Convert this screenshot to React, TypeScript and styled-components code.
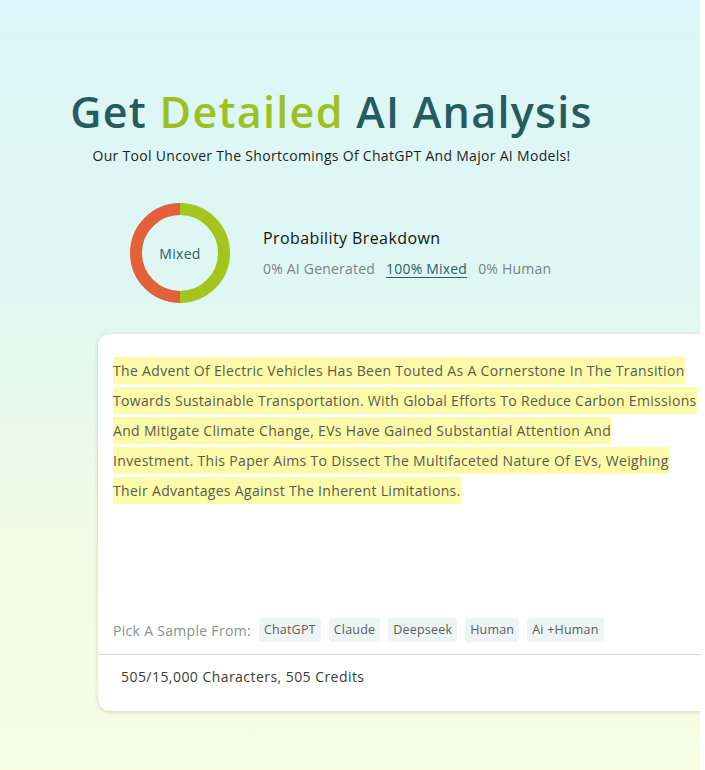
import React from 'react';
import styled, { createGlobalStyle } from 'styled-components';

const GlobalStyle = createGlobalStyle`
    html, body {
        margin: 0;
        padding: 0;
        background: #ffffff;
        font-family: 'Open Sans', 'Liberation Sans', sans-serif;
    }
    #root {
        height: 770px;
        overflow: hidden;
    }
`;

const SAMPLES = ['ChatGPT', 'Claude', 'Deepseek', 'Human', 'Ai +Human'];

const TEXT_LINES = [
    'The Advent Of Electric Vehicles Has Been Touted As A Cornerstone In The Transition',
    'Towards Sustainable Transportation. With Global Efforts To Reduce Carbon Emissions',
    'And Mitigate Climate Change, EVs Have Gained Substantial Attention And',
    'Investment. This Paper Aims To Dissect The Multifaceted Nature Of EVs, Weighing',
    'Their Advantages Against The Inherent Limitations. ',
];

const Ring: React.FC<{ label: string }> = ({ label }) => (
    <RingWrap>
        <svg width="100" height="100" viewBox="0 0 100 100">
            <path d="M50 6 A44 44 0 0 0 50 94" fill="none" stroke="#E2603A" strokeWidth="12" />
            <path d="M50 6 A44 44 0 0 1 50 94" fill="none" stroke="#A4C51E" strokeWidth="12" />
        </svg>
        <RingLabel>{label}</RingLabel>
    </RingWrap>
);

const App: React.FC = () => {
    return (
        <>
            <GlobalStyle />
            <Page>
                <Header>
                    <Title>
                        Get <Accent>Detailed</Accent> AI Analysis
                    </Title>
                    <Subtitle>Our Tool Uncover The Shortcomings Of ChatGPT And Major AI Models!</Subtitle>
                </Header>

                <Breakdown>
                    <Ring label="Mixed" />
                    <BreakdownInfo>
                        <BreakdownTitle>Probability Breakdown</BreakdownTitle>
                        <Stats>
                            <Stat>0% AI Generated</Stat>
                            <Stat active>100% Mixed</Stat>
                            <Stat>0% Human</Stat>
                        </Stats>
                    </BreakdownInfo>
                </Breakdown>

                <Card>
                    <CardBody>
                        <Passage>
                            {TEXT_LINES.map((line, i) => (
                                <React.Fragment key={i}>
                                    <Mark>{line}</Mark>
                                    <br />
                                </React.Fragment>
                            ))}
                        </Passage>
                        <SampleRow>
                            <SampleLabel>Pick A Sample From:</SampleLabel>
                            {SAMPLES.map((s) => (
                                <Chip key={s}>{s}</Chip>
                            ))}
                        </SampleRow>
                    </CardBody>
                    <CardFooter>505/15,000 Characters, 505 Credits</CardFooter>
                </Card>
            </Page>
        </>
    );
};

const Page = styled.div`
    width: 700px;
    height: 770px;
    overflow: hidden;
    background: linear-gradient(180deg, #dcf6f9 0%, #def7f3 35%, #eefbe6 65%, #f8fde2 100%);
    display: flex;
    flex-direction: column;
`;

const Header = styled.div`
    width: 663px;
    padding-top: 84px;
    display: flex;
    flex-direction: column;
    align-items: center;
`;

const Title = styled.h1`
    margin: 0;
    font-size: 43px;
    line-height: 56px;
    font-weight: 600;
    color: #285b60;
    letter-spacing: 1.3px;
`;

const Accent = styled.span`
    color: #9cc11f;
`;

const Subtitle = styled.p`
    margin: 6px 0 0;
    font-size: 14px;
    line-height: 20px;
    color: #1e1e1e;
    letter-spacing: 0.3px;
`;

const Breakdown = styled.div`
    display: flex;
    align-items: center;
    gap: 33px;
    padding: 37px 0 0 130px;
`;

const RingWrap = styled.div`
    position: relative;
    width: 100px;
    height: 100px;
`;

const RingLabel = styled.span`
    position: absolute;
    inset: 0;
    display: flex;
    align-items: center;
    justify-content: center;
    font-size: 14px;
    color: #2f6068;
    letter-spacing: 0.3px;
`;

const BreakdownInfo = styled.div`
    display: flex;
    flex-direction: column;
    gap: 10px;
`;

const BreakdownTitle = styled.div`
    font-size: 16px;
    line-height: 22px;
    font-weight: 500;
    color: #141414;
    letter-spacing: 0.4px;
`;

const Stats = styled.div`
    display: flex;
    gap: 11px;
`;

const Stat = styled.span<{ active?: boolean }>`
    font-size: 14px;
    line-height: 20px;
    letter-spacing: 0.2px;
    color: ${(p) => (p.active ? '#2d6068' : '#7b8383')};
    text-decoration: ${(p) => (p.active ? 'underline' : 'none')};
    text-underline-offset: 3px;
`;

const Card = styled.div`
    margin: 31px 0 0 98px;
    width: 640px;
    background: #ffffff;
    border-radius: 12px;
    box-shadow: 0 1px 4px rgba(0, 0, 0, 0.16);
    display: flex;
    flex-direction: column;
`;

const CardBody = styled.div`
    padding: 22px 15px 12px;
    height: 320px;
    box-sizing: border-box;
    display: flex;
    flex-direction: column;
    justify-content: space-between;
`;

const Passage = styled.div`
    font-size: 14px;
    line-height: 30px;
    color: #5b5b4e;
    white-space: nowrap;
    letter-spacing: 0.32px;
`;

const Mark = styled.span`
    background: #fdfaa9;
    padding: 4px 0;
    -webkit-box-decoration-break: clone;
    box-decoration-break: clone;
`;

const SampleRow = styled.div`
    display: flex;
    align-items: center;
    gap: 8px;
`;

const SampleLabel = styled.span`
    font-size: 14px;
    color: #8a8f8f;
    margin-right: 0;
    letter-spacing: 0.3px;
`;

const Chip = styled.span`
    background: #eef3f3;
    border-radius: 4px;
    padding: 3px 5px;
    font-size: 12.5px;
    line-height: 18px;
    color: #5a5f5f;
    letter-spacing: 0.2px;
`;

const CardFooter = styled.div`
    border-top: 1px solid #d9d9d9;
    padding: 12px 23px 0;
    height: 57px;
    box-sizing: border-box;
    font-size: 14px;
    line-height: 20px;
    color: #3a3a3a;
    letter-spacing: 0.45px;
`;

export default App;
